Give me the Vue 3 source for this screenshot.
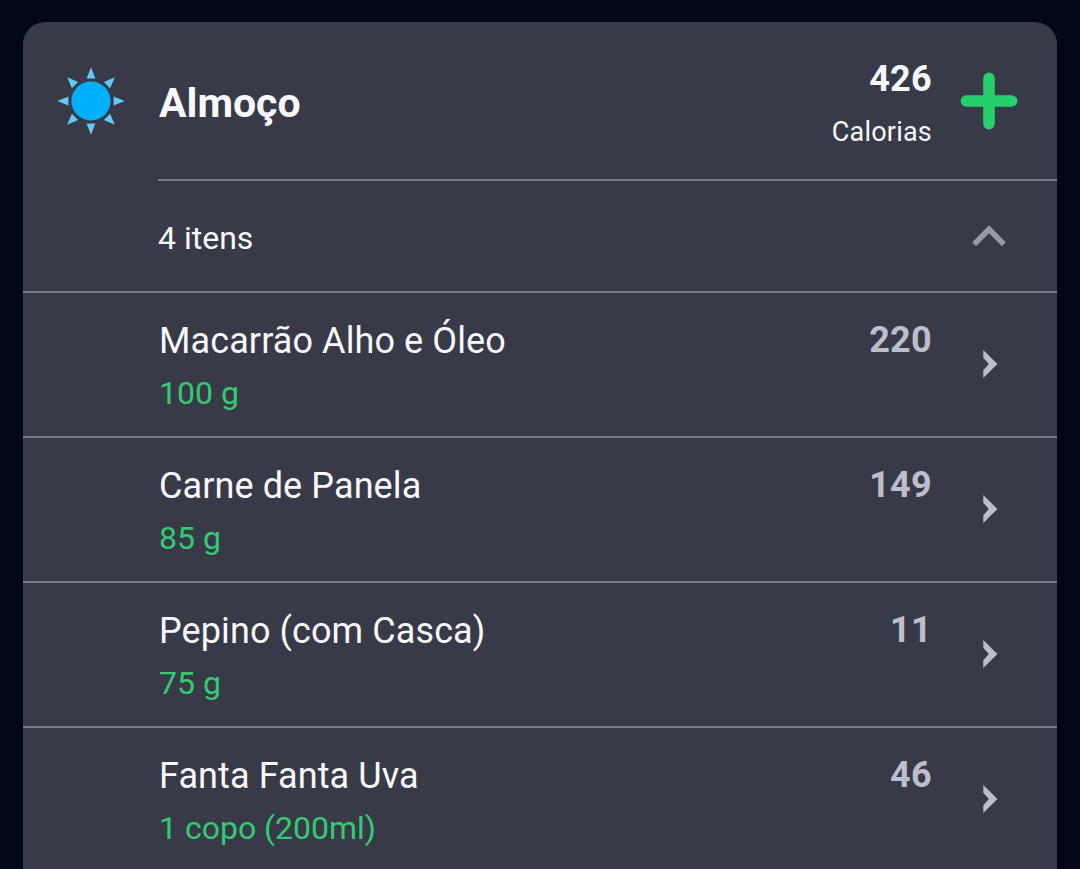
<script setup>
const rays = [0, 45, 90, 135, 180, 225, 270, 315]
const items = [
  { name: 'Macarrão Alho e Óleo', portion: '100 g', calories: 220 },
  { name: 'Carne de Panela', portion: '85 g', calories: 149 },
  { name: 'Pepino (com Casca)', portion: '75 g', calories: 11 },
  { name: 'Fanta Fanta Uva', portion: '1 copo (200ml)', calories: 46 },
]
</script>

<template>
  <main class="screen">
    <section class="card">
      <header class="header">
        <svg class="sun" viewBox="-34 -34 68 68" aria-hidden="true">
          <path
            v-for="angle in rays"
            :key="angle"
            d="M0 -33.7 L4.4 -22.6 H-4.4 Z"
            fill="#64c9f5"
            :transform="`rotate(${angle})`"
          />
          <circle r="19.6" fill="#00b0fa" />
        </svg>
        <h1 class="title">Almoço</h1>
        <div class="total">
          <strong class="total-value">426</strong>
          <span class="total-label">Calorias</span>
        </div>
        <svg class="plus" viewBox="0 0 58 58" aria-hidden="true">
          <path d="M29 6.4 V51.6 M6.4 29 H51.6" stroke="#26cf6c" stroke-width="11.6" stroke-linecap="round" />
        </svg>
      </header>

      <div class="summary">
        <span class="count">4 itens</span>
        <svg class="collapse" viewBox="0 0 34 22" aria-hidden="true">
          <path d="M17 0.3 L33.8 17.3 L30 21.3 L17 8.3 L4 21.3 L0.2 17.3 Z" fill="#9799a4" />
        </svg>
      </div>

      <ul class="list">
        <li v-for="item in items" :key="item.name" class="item">
          <div class="info">
            <span class="name">{{ item.name }}</span>
            <span class="portion">{{ item.portion }}</span>
          </div>
          <strong class="calories">{{ item.calories }}</strong>
          <svg class="chevron" viewBox="0 0 15 28" aria-hidden="true">
            <path d="M0.3 0 L14.4 14 L0.3 28 V20.2 L5.8 14 L0.3 7.8 Z" fill="#bcbecb" />
          </svg>
        </li>
      </ul>
    </section>
  </main>
</template>

<style>
body {
  margin: 0;
  background: #020815;
}
</style>

<style scoped>
.screen {
  box-sizing: border-box;
  height: 869px;
  padding: 22px 23px 0;
  overflow: hidden;
  background: #020815;
  font-family: Roboto, "Liberation Sans", sans-serif;
  color: #f8f8ff;
}
.card {
  height: 860px;
  border-radius: 22px 22px 0 0;
  background: #383b47;
}
.header,
.summary,
.item {
  display: grid;
  grid-template-columns: 136px 1fr auto 125px;
  box-sizing: border-box;
}
.header {
  height: 157px;
}
.sun {
  width: 68px;
  height: 68px;
  margin: 45px 0 0 34px;
}
.title {
  margin: 57px 0 0;
  font-size: 41px;
  line-height: 48px;
  font-weight: 700;
}
.total {
  display: flex;
  flex-direction: column;
  align-items: flex-end;
  gap: 13px;
  padding-top: 37px;
}
.total-value,
.calories {
  font-size: 36px;
  line-height: 40px;
  font-weight: 700;
  letter-spacing: 0.3px;
}
.total-label {
  font-size: 27px;
  line-height: 40px;
  letter-spacing: 0.2px;
}
.plus {
  width: 58px;
  height: 58px;
  margin: 50px 0 0 28px;
  fill: none;
}
.summary {
  height: 112px;
  margin-left: 135px;
  grid-template-columns: 1fr 85px;
  border-top: 2px solid #797b86;
}
.count {
  margin-top: 37px;
  font-size: 32px;
  line-height: 40px;
}
.collapse {
  width: 34px;
  height: 22px;
  margin-top: 44px;
}
.list {
  margin: 0;
  padding: 0;
  list-style: none;
}
.item {
  height: 145px;
  border-top: 2px solid #797b86;
}
.info {
  grid-column: 2;
  display: flex;
  flex-direction: column;
  gap: 12px;
  padding-top: 28px;
}
.name {
  font-size: 36px;
  line-height: 40px;
  letter-spacing: 0.1px;
}
.portion {
  font-size: 32px;
  line-height: 40px;
  color: #34ca73;
}
.calories {
  margin-top: 27px;
  color: #bcbecb;
}
.chevron {
  width: 15px;
  height: 28px;
  margin: 57px 0 0 51px;
}
</style>
